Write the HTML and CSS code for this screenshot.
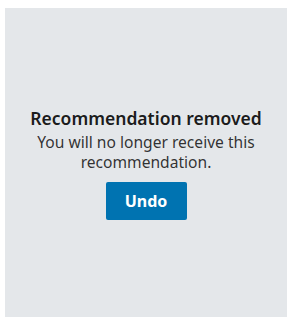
FILE: index.html
```html
<!DOCTYPE html>
<html lang="en">
<head>
    <meta charset="UTF-8">
    <meta name="viewport" content="width=device-width, initial-scale=1.0">
    <title>Recommendation removed</title>
    <link rel="stylesheet" href="styles.css">
</head>
<body>
    <div class="card">
        <h2 class="title">Recommendation removed</h2>
        <p class="message">You will no longer receive this recommendation.</p>
        <button class="undo">Undo</button>
    </div>
</body>
</html>
```

FILE: styles.css
```css
body {
    margin: 0;
    padding: 8px 4px 5px 5px;
    background-color: white;
    font-family: "Noto Sans", "Open Sans", sans-serif;
}
.card {
    background-color: #e4e7ea;
    height: 309px;
    display: flex;
    flex-direction: column;
    justify-content: center;
    align-items: center;
    text-align: center;
    padding: 0 20px;
    box-sizing: border-box;
}
.title {
    margin: 0;
    font-size: 17.5px;
    font-weight: 600;
    line-height: 24px;
    color: rgba(0, 0, 0, 0.9);
}
.message {
    margin: 2px 0 10px;
    font-size: 15.6px;
    line-height: 20px;
    color: rgba(0, 0, 0, 0.8);
}
.undo {
    background-color: #0073b1;
    color: white;
    border: none;
    border-radius: 2px;
    font-family: inherit;
    font-size: 16px;
    font-weight: 700;
    width: 81px;
    height: 38px;
    cursor: pointer;
}
```
